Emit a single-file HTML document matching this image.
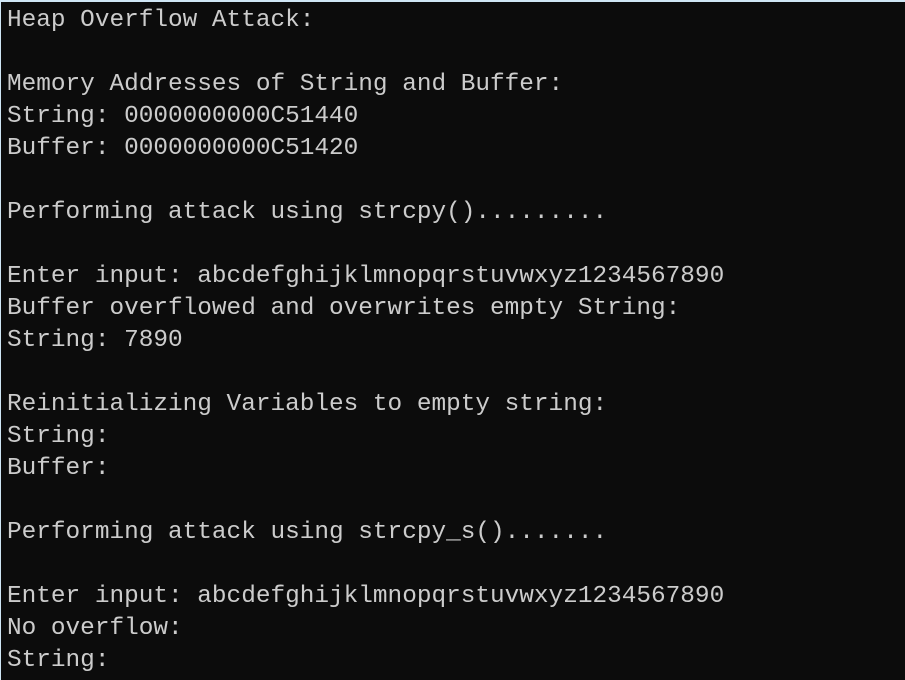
<!DOCTYPE html>
<html><head><style>
html,body{margin:0;padding:0;}
body{width:905px;height:680px;background:#0c0c0c;overflow:hidden;position:relative;border-top:2px solid #cfe6f5;box-sizing:border-box;border-left:1px solid #cfe6f5;}
pre{margin:0;position:absolute;left:6px;top:3px;font-family:"Liberation Mono",monospace;font-size:24.4px;line-height:32px;color:#cccccc;}
</style></head><body>
<pre>Heap Overflow Attack:

Memory Addresses of String and Buffer:
String: 0000000000C51440
Buffer: 0000000000C51420

Performing attack using strcpy().........

Enter input: abcdefghijklmnopqrstuvwxyz1234567890
Buffer overflowed and overwrites empty String:
String: 7890

Reinitializing Variables to empty string:
String:
Buffer:

Performing attack using strcpy_s().......

Enter input: abcdefghijklmnopqrstuvwxyz1234567890
No overflow:
String:</pre>
</body></html>
